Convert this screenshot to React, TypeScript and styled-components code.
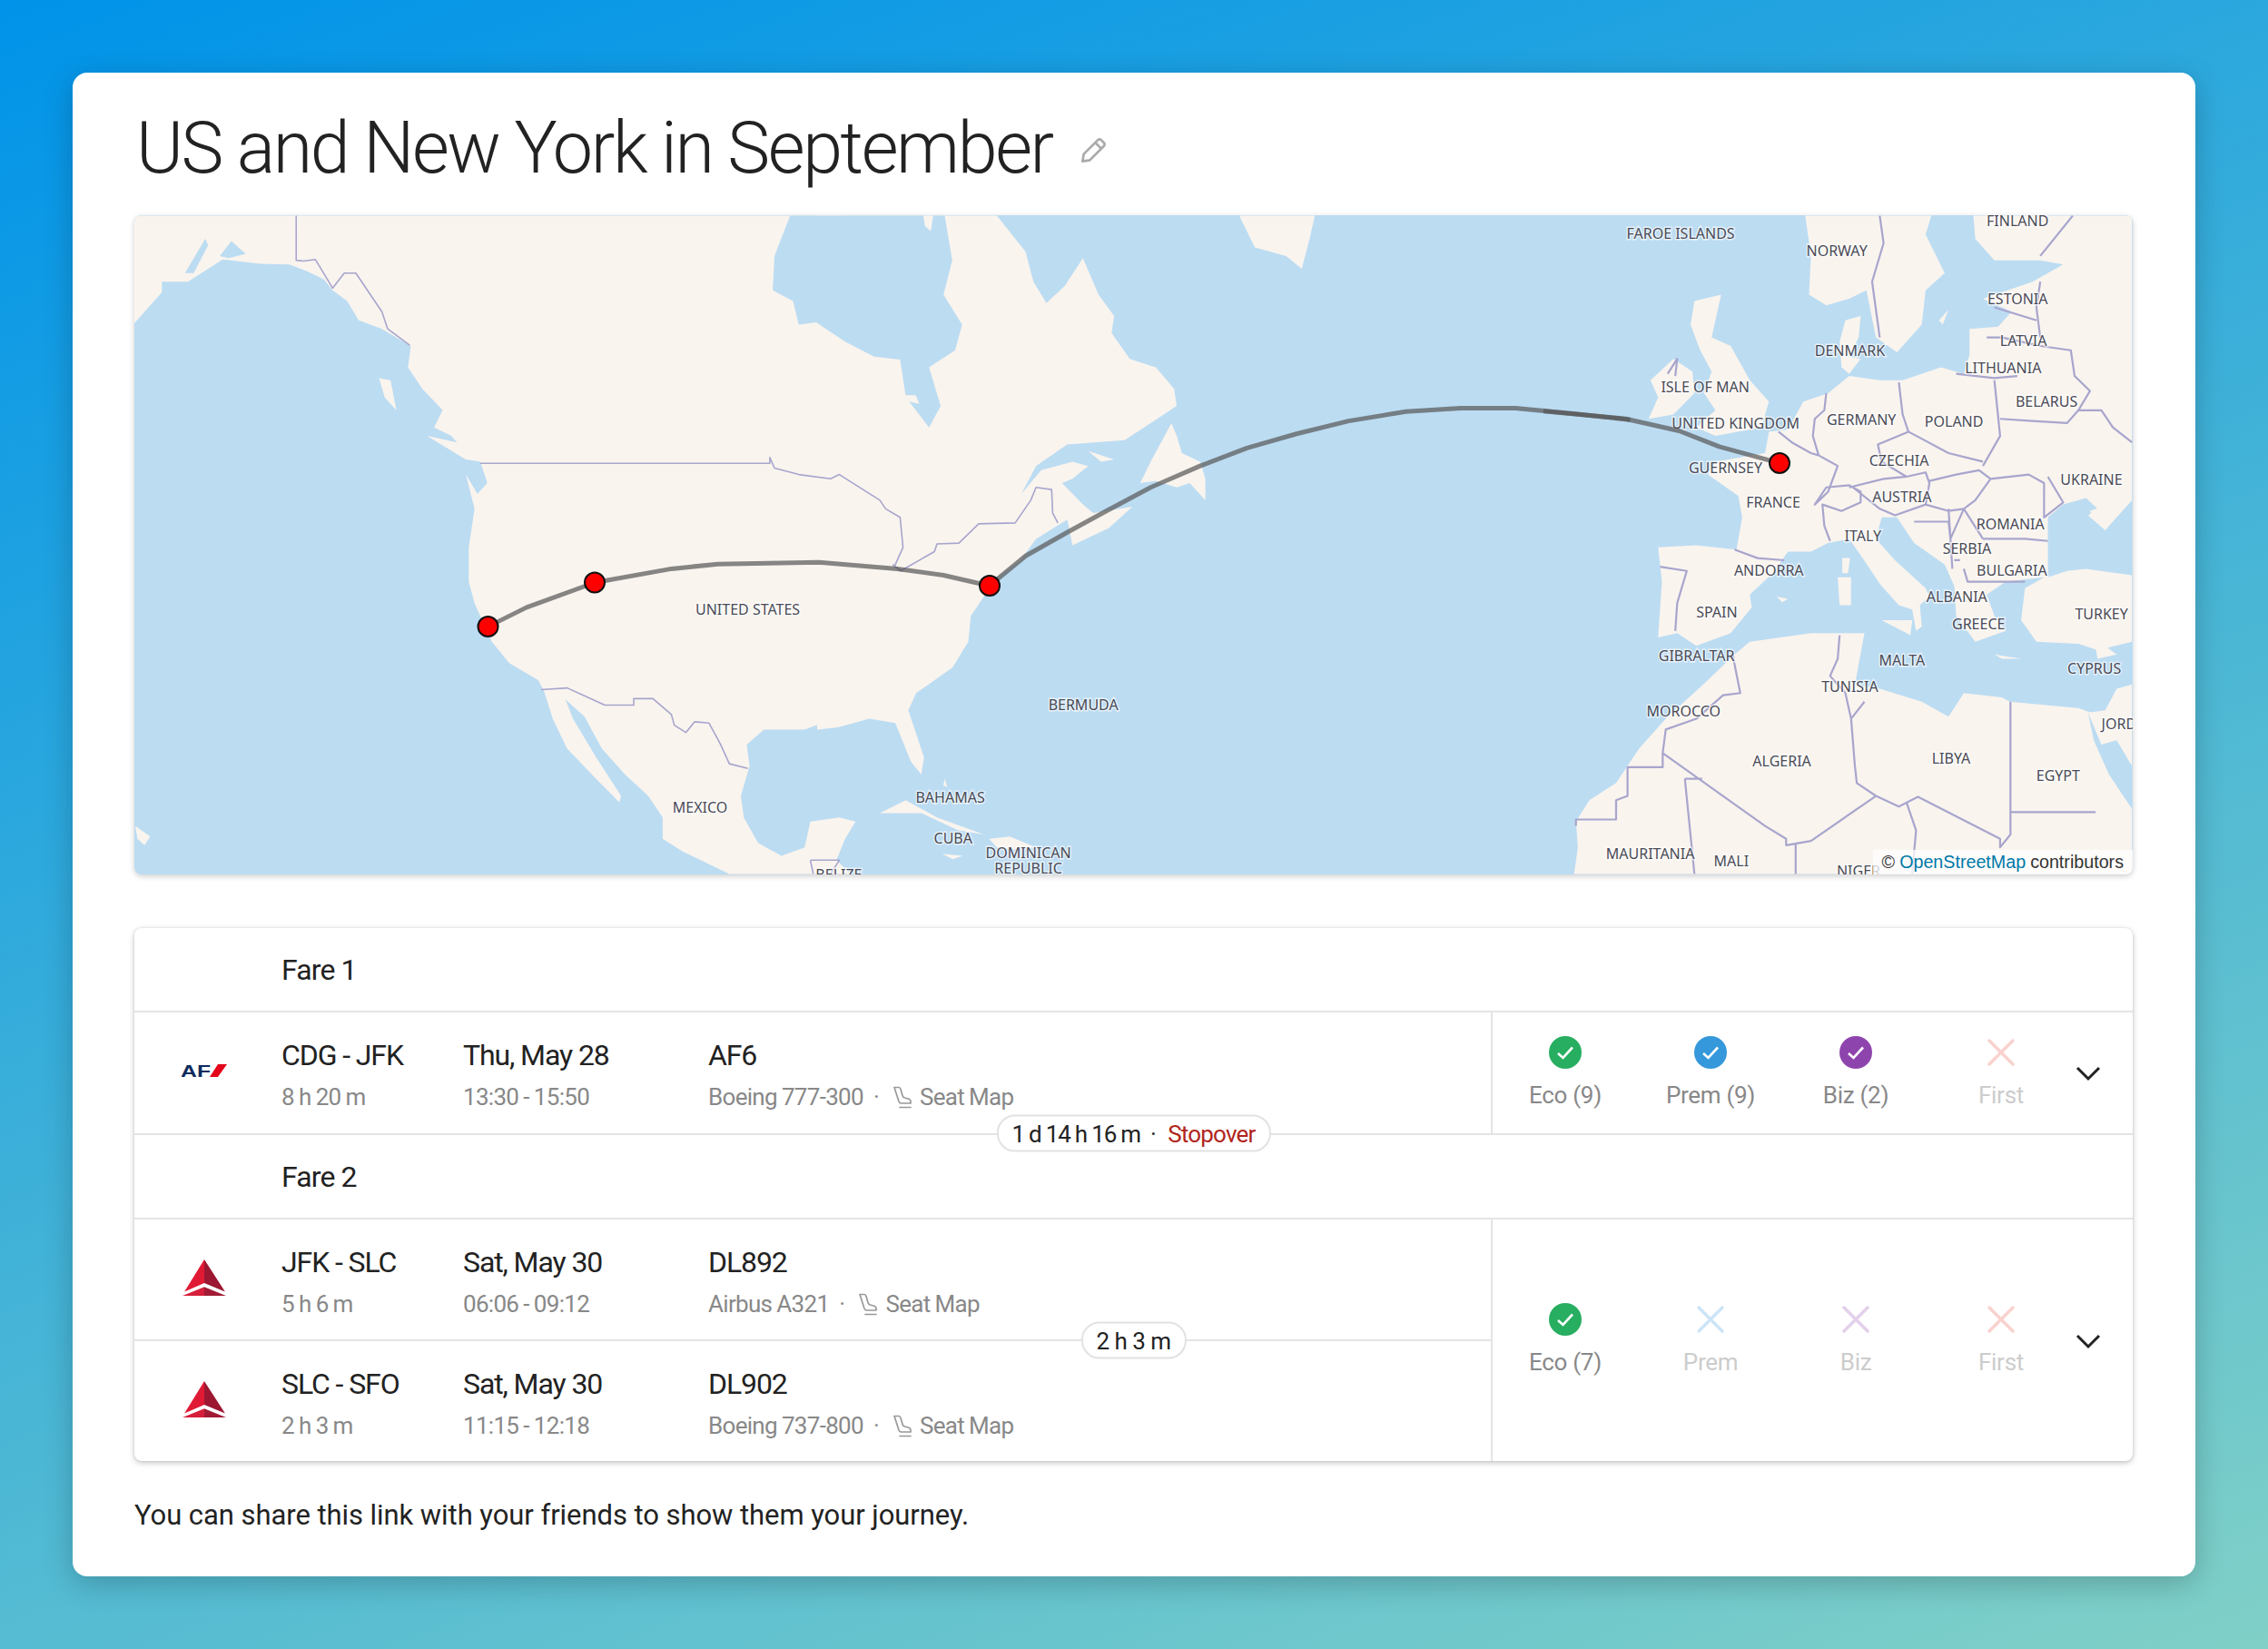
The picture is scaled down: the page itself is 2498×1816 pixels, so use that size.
import React from "react";
import styled, { createGlobalStyle } from "styled-components";

const GlobalStyle = createGlobalStyle`
  html, body { margin: 0; padding: 0; }
  body { font-family: Roboto, "Liberation Sans", sans-serif; color: #222; }
`;

const Page = styled.div`
  min-height: 1816px;
  box-sizing: border-box;
  padding: 80px;
  background: linear-gradient(160deg, #0093e9 0%, #80d0c7 100%);
`;
const Card = styled.main`
  height: 1656px;
  box-sizing: border-box;
  padding: 24px 69px 0 68px;
  background: #fff;
  border-radius: 16px;
  box-shadow: 0 8px 32px rgba(0, 0, 0, 0.22);
`;
const TitleRow = styled.div`
  display: flex;
  align-items: flex-start;
  gap: 30px;
  height: 133px;
`;
const Title = styled.h1`
  margin: 11px 0 0 2px;
  font-size: 79px;
  line-height: 96px;
  font-weight: 300;
  letter-spacing: -2.4px;
  color: #222;
`;
const EditIcon = styled.svg`
  width: 32px;
  height: 32px;
  margin-top: 45px;
  fill: none;
  stroke: #aaa;
  stroke-width: 2;
  stroke-linejoin: round;
`;
const MapFrame = styled.section`
  position: relative;
  height: 726px;
  border-radius: 8px;
  overflow: hidden;
  box-shadow: 0 2px 6px rgba(0, 0, 0, 0.2);
  background: #bcdcf2;
`;
const MapSvg = styled.svg`
  display: block;
  width: 100%;
  height: 100%;
`;
const MapLabel = styled.text`
  font-family: "Noto Sans", sans-serif;
  font-size: 16px;
  fill: #4a4a56;
  text-anchor: middle;
  paint-order: stroke;
  stroke: rgba(255, 255, 255, 0.6);
  stroke-width: 3px;
`;
const Attribution = styled.div`
  position: absolute;
  right: 0;
  bottom: 0;
  height: 27px;
  padding: 0 10px;
  display: flex;
  align-items: center;
  gap: 5px;
  background: rgba(255, 255, 255, 0.75);
  font-family: "Liberation Sans", Arial, sans-serif;
  font-size: 19.7px;
  color: #333;
`;
const OsmLink = styled.span`
  color: #0078a8;
`;
const Table = styled.section`
  margin-top: 59px;
  height: 587px;
  border-radius: 8px;
  box-shadow: 0 2px 6px rgba(0, 0, 0, 0.24), 0 0 2px rgba(0, 0, 0, 0.12);
  background: #fff;
`;
const FareHeader = styled.div`
  box-sizing: border-box;
  height: 93px;
  padding: 1px 0 0 162px;
  display: flex;
  align-items: center;
  font-size: 32px;
  letter-spacing: -0.9px;
  color: #222;
  border-bottom: 2px solid #e4e4e4;
`;
const FareBody = styled.div`
  position: relative;
  display: grid;
  grid-template-columns: 1496px 1fr;
  border-bottom: ${(p) => (p.$last ? "none" : "2px solid #e4e4e4")};
`;
const Segments = styled.div`
  border-right: 2px solid #e4e4e4;
`;
const Segment = styled.div`
  box-sizing: border-box;
  height: ${(p) => p.$height}px;
  display: grid;
  grid-template-columns: 162px 200px 270px 1fr;
  padding-top: 24px;
  border-bottom: ${(p) => (p.$divided ? "2px solid #e4e4e4" : "none")};
`;
const LogoCell = styled.div`
  width: 154px;
  height: 80px;
  display: flex;
  align-items: center;
  justify-content: center;
`;
const CellTitle = styled.div`
  font-size: 32px;
  line-height: 46px;
  letter-spacing: -1.1px;
  color: #222;
  white-space: nowrap;
`;
const CellSub = styled.div`
  display: flex;
  align-items: center;
  font-size: 26px;
  line-height: 46px;
  letter-spacing: -0.7px;
  word-spacing: -0.7px;
  color: #888;
  white-space: nowrap;
`;
const Dot = styled.span`
  margin: 0 13px 0 11px;
`;
const SeatIcon = styled.svg`
  width: 20px;
  height: 25px;
  margin: 0 9px 0 3px;
  fill: none;
  stroke: #999;
  stroke-width: 1.7;
  stroke-linejoin: round;
  stroke-linecap: round;
`;
const Pill = styled.div`
  position: absolute;
  left: 50%;
  top: ${(p) => p.$at};
  z-index: 2;
  transform: translate(-50%, -50%);
  box-sizing: border-box;
  height: 41px;
  padding: 0 15px;
  display: flex;
  align-items: center;
  background: #fff;
  border: 2px solid #e2e2e2;
  border-radius: 20px;
  font-size: 26px;
  letter-spacing: -0.5px;
  color: #222;
  white-space: nowrap;
`;
const Layover = styled.span`
  letter-spacing: -1.2px;
`;
const Stopover = styled.span`
  color: #b0261c;
  letter-spacing: -0.8px;
`;
const Cabins = styled.div`
  display: flex;
  align-items: center;
  padding-top: 1px;
`;
const Cabin = styled.div`
  width: 160px;
  display: flex;
  flex-direction: column;
  align-items: center;
`;
const CabinIcon = styled.svg`
  width: 36px;
  height: 36px;
  display: block;
`;
const CabinLabel = styled.div`
  margin-top: 11px;
  font-size: 26px;
  line-height: 36px;
  letter-spacing: -0.3px;
  color: ${(p) => (p.$off ? "#ccc" : "#888")};
`;
const Chevron = styled.svg`
  width: 32px;
  height: 32px;
  fill: none;
  stroke: #222;
  stroke-width: 3;
`;
const Footer = styled.p`
  margin: 41px 0 0;
  font-size: 31px;
  line-height: 38px;
  letter-spacing: -0.06px;
  color: #222;
`;

const Land = styled.path`
  fill: #f9f4ee;
  stroke: none;
`;
const Water = styled.path`
  fill: #bcdcf2;
  stroke: none;
`;
const Border = styled.path`
  fill: none;
  stroke: #a8a5cd;
  stroke-width: ${(p) => p.$w || 2}px;
  stroke-linejoin: round;
  vector-effect: non-scaling-stroke;
`;
const Route = styled.path`
  fill: none;
  stroke: #555;
  stroke-opacity: 0.7;
  stroke-width: 5px;
  stroke-linejoin: round;
  vector-effect: non-scaling-stroke;
`;
const Marker = styled.circle`
  fill: #f00;
  stroke: #111;
  stroke-width: 2px;
`;

const Z6 = "translate(140 230) scale(0.63776 0.47192)";
const Z7 = "translate(900 230) scale(0.57398 0.47192)";
const Z5 = "translate(1700 230) scale(0.42088 0.47192)";

const labels = [
  ["FINLAND", 1395, 157], ["FAROE ISLANDS", 1162, 166], ["NORWAY", 1270, 178], ["ESTONIA", 1395, 211],
  ["LATVIA", 1399, 240], ["LITHUANIA", 1385, 259], ["DENMARK", 1279, 247], ["ISLE OF MAN", 1179, 272],
  ["BELARUS", 1415, 282], ["UNITED KINGDOM", 1200, 297], ["GERMANY", 1287, 295], ["POLAND", 1351, 296],
  ["GUERNSEY", 1193, 328], ["CZECHIA", 1313, 323], ["UKRAINE", 1446, 336], ["FRANCE", 1226, 352],
  ["AUSTRIA", 1315, 348], ["ROMANIA", 1390, 367], ["ITALY", 1288, 375], ["SERBIA", 1360, 384],
  ["ANDORRA", 1223, 399], ["BULGARIA", 1391, 399], ["ALBANIA", 1353, 417], ["TURKEY", 1453, 429],
  ["SPAIN", 1187, 428], ["GREECE", 1368, 436], ["GIBRALTAR", 1173, 458], ["MALTA", 1315, 461],
  ["CYPRUS", 1448, 467], ["TUNISIA", 1279, 479], ["MOROCCO", 1164, 496], ["JORDAN", 1472, 505],
  ["ALGERIA", 1232, 531], ["LIBYA", 1349, 529], ["EGYPT", 1423, 541], ["MAURITANIA", 1141, 595],
  ["MALI", 1197, 600], ["NIGER", 1285, 607], ["UNITED STATES", 517, 426], ["MEXICO", 484, 563],
  ["BAHAMAS", 657, 556], ["CUBA", 659, 584], ["DOMINICAN", 711, 594], ["REPUBLIC", 711, 605],
  ["BELIZE", 580, 609], ["BERMUDA", 749, 492],
];

const WorldMap = () => (
  <MapSvg viewBox="148 237 2201 726" preserveAspectRatio="none">
    <g transform={Z6}>
      <Land d="M12 16L12 268L40 225L60 195L60 170L105 170L165 118L230 128L280 130L310 145L340 165L355 190L380 215L400 260L440 280L490 320L485 370L510 420L545 470L530 510L560 530L585 570L610 590L622 640L605 665L585 620L600 700L590 790L590 870L600 920L630 1010L660 1060L710 1100L720 1125L735 1190L760 1260L810 1330L850 1385L853 1370L810 1280L770 1190L757 1145L790 1185L820 1260L860 1320L900 1370L925 1420L925 1470L960 1500L1040 1552L1250 1552L1225 1520L1240 1470L1258 1430L1230 1420L1180 1430L1170 1490L1130 1510L1090 1480L1065 1420L1060 1370L1075 1300L1070 1250L1100 1215L1170 1215L1240 1180L1240 16Z" />
      <Water d="M100 150L135 70L140 85L115 150Z" />
      <Water d="M160 110L180 75L205 105L175 115Z" />
      <Land d="M435 395L455 400L465 470L445 440Z" />
      <Land d="M518 530L570 545L610 590L585 585Z" />
      <Land d="M14 1440L40 1465L30 1485L18 1470Z" />
    </g>
    <g transform={Z7}>
      <Land d="M0 16L345 16L400 100L415 170L440 220L475 180L510 115L540 200L570 250L565 290L600 350L650 370L685 420L690 460L640 500L590 540L480 550L420 600L392 665L430 610L490 590L520 600L490 630L470 640L510 690L530 710L605 695L560 745L490 785L480 725L420 770L390 820L345 860L320 905L295 950L290 1010L260 1070L190 1130L175 1170L205 1280L200 1320L180 1290L150 1200L100 1190L40 1210L0 1215Z" />
      <Land d="M620 640L640 590L680 500L690 530L700 570L735 590L745 630L745 680L715 640L690 650L650 635Z" />
      <Land d="M810 16L840 90L900 110L930 140L945 70L955 16Z" />
      <Land d="M120 1410L170 1380L230 1420L320 1460L270 1450L200 1410Z" />
      <Land d="M330 1470L370 1465L420 1490L375 1495L345 1490Z" />
      <Land d="M240 1505L280 1510L260 1518Z" />
      <Land d="M520 565L570 585L545 590Z" />
      <Land d="M245 1330L250 1350L242 1345Z" />
    </g>
    <g transform={Z6}>
      <Water d="M1145 16L1118 110L1115 190L1150 215L1160 270L1190 265L1240 310L1290 345L1335 352L1345 440L1385 510L1405 460L1385 370L1430 330L1442 270L1410 200L1425 120L1412 16Z" />
      <Land d="M1375 16L1392 16L1388 52L1378 40Z" />
      <Land d="M1342 435L1362 435L1368 455L1350 450Z" />
      <Border $w={1.6} d="M292 16L292 120L305 122L325 118L355 185L375 150L395 150L440 240L450 280L488 318" />
      <Border $w={1.6} d="M715 1122L760 1118L825 1158L875 1158L875 1143L908 1143L940 1180L945 1205L965 1222L980 1197L1005 1200L1025 1250L1040 1295L1072 1306" />
      <Border $w={1.6} d="M610 594L1110 594L1110 580L1118 605L1160 620L1215 630L1230 620L1300 680L1310 700L1335 720L1340 790L1325 835L1340 845" />
      <Border $w={1.6} d="M1180 1520L1230 1520L1215 1552M1180 1520L1185 1552" />
    </g>
    <g transform={Z7}>
      <Border $w={1.6} d="M145 830L160 845L225 800L230 782L272 780L310 735L380 733L410 680L420 650L450 655L452 710L462 733" />
    </g>
    <g transform={Z5}>
      <Land d="M1125 16L1540 16L1540 1010L1450 1030L1400 1015L1290 1010L1250 960L1260 885L1310 860L1210 870L1160 900L1180 950L1210 985L1130 1010L1080 950L1075 880L1050 830L970 780L925 720L885 720L870 770L920 820L1000 885L1010 905L985 925L990 975L975 985L965 935L930 925L880 875L835 815L800 770L745 780L700 800L640 800L600 850L540 900L545 930L490 990L400 1020L350 990L300 1000L310 870L300 790L400 785L505 795L520 720L510 670L430 620L450 590L580 570L590 520L640 515L680 450L745 430L800 390L880 400L940 400L1040 370L1100 385L1115 340L1115 280L1190 275L1225 240L1150 210L1280 170L1360 130L1300 120L1180 120L1130 70Z" />
      <Water d="M1320 720L1360 690L1420 675L1450 700L1425 715L1470 750L1500 720L1540 680L1540 855L1420 840L1370 845L1320 860L1320 790Z" />
      <Land d="M1430 705L1460 695L1495 715L1470 745L1445 725Z" />
      <Land d="M685 16L700 110L695 200L740 225L800 210L845 190L870 300L925 335L990 270L1000 190L1050 150L1000 60L1015 16Z" />
      <Land d="M775 310L790 260L830 250L825 300L800 345L830 350L800 385L780 370Z" />
      <Land d="M395 215L465 200L440 300L490 320L540 400L590 450L570 510L450 530L400 510L450 470L420 430L440 380L410 330L385 270Z" />
      <Land d="M280 400L340 350L390 380L395 430L340 480L275 490L300 440Z" />
      <Land d="M770 860L805 860L805 925L775 925Z" />
      <Land d="M782 815L802 815L797 850L782 850Z" />
      <Land d="M885 960L965 960L960 995Z" />
      <Land d="M1180 1040L1250 1050L1200 1050Z" />
      <Land d="M1440 1000L1500 1040L1450 1050Z" />
      <Land d="M610 905L640 910L625 918Z" />
      <Land d="M1035 260L1060 235L1045 270Z" />
      <Land d="M500 1040L540 1010L700 990L780 990L840 990L815 1110L880 1120L990 1150L1060 1185L1100 1130L1200 1140L1220 1150L1400 1165L1430 1175L1470 1170L1500 1120L1540 1110L1540 1552L80 1552L90 1490L85 1430L120 1380L190 1340L250 1260L320 1190L430 1100Z" />
      <Water d="M1425 1175L1460 1250L1500 1240L1540 1300L1540 1400L1480 1320L1440 1240Z" />
      <Border $w={2.2} d="M880 16L890 80L860 170L880 300M1385 16L1300 110M325 385L350 350L345 390M740 430L735 470L710 490L705 530L720 575M615 520L650 545L700 570L720 575L770 600L745 660L710 690L740 650L800 645L830 660L830 685L780 705L730 690L735 740L750 775M500 795L560 815L630 820M305 835L375 845L350 920L345 985" />
      <Border $w={2.2} d="M930 405L940 480L955 520L875 550L885 590L950 625M955 520L1060 570L1150 590M800 650L890 630L950 625L1000 615L1010 640L1000 690L920 715L880 700L810 650M1010 635L1080 620L1140 610L1170 630M1180 400L1195 530L1150 600M1080 385L1180 395L1240 390M1160 300L1200 300L1300 320L1380 330L1390 390L1430 425L1400 470M1300 170L1290 230L1300 300M1180 230L1290 260" />
      <Border $w={2.2} d="M1195 490L1280 495L1370 500L1400 470L1460 470L1490 510L1540 545M1170 630L1270 620L1310 640L1310 720L1360 685L1320 625M1170 630L1130 680L1100 700M1000 690L1060 705L1100 700M1150 770L1260 770L1320 775M970 730L1060 730L1065 770L1100 700L1150 770M1060 700L1070 840M1100 840L1110 870L1210 870L1260 870M1075 820L1090 820" />
      <Border $w={2.2} d="M495 1040L515 1130L470 1135L400 1190L320 1215L312 1270L580 1440L635 1470L635 1485L700 1475L870 1370M312 1270L312 1303L220 1303L220 1370L190 1380L190 1425L85 1425L85 1440M370 1330L415 1330M370 1330L395 1552M775 995L770 1050L750 1090L790 1130L805 1190L840 1150M805 1190L815 1300L820 1340L870 1370L930 1395L980 1372L1195 1470L1195 1490L1222 1460L1222 1150M1222 1408L1445 1408M950 1385L975 1450L965 1552M660 1480L660 1552" />
    </g>
    {labels.map(([t, x, y]) => (
      <MapLabel key={t} x={x * 1.593} y={y * 1.593 - 1.5}>
        {t}
      </MapLabel>
    ))}
    <g transform={Z6}>
      <Route d="M623 975L690 930L808 872L940 840L1020 829L1195 825L1330 840L1410 855L1490 880" />
    </g>
    <g transform={Z7}>
      <Route d="M330 880L400 810L480 755L555 705L640 650L735 600L825 558L920 525L1020 495L1130 473L1235 465L1340 465L1450 478L1560 492" />
    </g>
    <g transform={Z5}>
      <Route d="M0 472L215 490L355 518L460 555L617 593" />
    </g>
    <Marker cx="537.500" cy="690" r="11" />
    <Marker cx="655" cy="641.500" r="11" />
    <Marker cx="1090" cy="645" r="11" />
    <Marker cx="1960" cy="510" r="11" />
  </MapSvg>
);

const Delta = () => (
  <svg width="50" height="41" viewBox="0 0 48 38" preserveAspectRatio="none">
    <path fill="#e01a35" d="M24 0V24L3 33Z" />
    <path fill="#9c1731" d="M24 0V24L46 33Z" />
    <path fill="#d61f3a" d="M24 28V37H1Z" />
    <path fill="#a21b35" d="M24 28V37H47Z" />
  </svg>
);

const AirFrance = () => (
  <svg width="52" height="16" viewBox="0 0 52 16">
    <text x="0" y="15" fontFamily="Liberation Sans, Arial, sans-serif" fontWeight="700" fontSize="19" fill="#0d2b5e" textLength="33" lengthAdjust="spacingAndGlyphs">
      AF
    </text>
    <path fill="#e3051b" d="M32 15L41 1H51L41 15Z" />
  </svg>
);

const Seat = () => (
  <SeatIcon viewBox="0 0 20 25">
    <path d="M1 1.500h5c1 0 1.500.5 2 2l2 7c.3 1.200 1 2 2.500 2.500l4.500 1.300c1.200.4 2 1.200 2 2.500v2.200H8.500c-1.200 0-2-.7-2.500-2L1 1.500z" />
    <path d="M7 23.500h12" />
  </SeatIcon>
);

const Check = ({ color }) => (
  <CabinIcon viewBox="0 0 36 36">
    <circle cx="18" cy="18" r="18" fill={color} />
    <path d="M10 19l5.500 5L26 12.500" fill="none" stroke="#fff" strokeWidth="2.600" />
  </CabinIcon>
);
const Cross = ({ color }) => (
  <CabinIcon viewBox="0 0 36 36">
    <path d="M5 5L31 31M31 5L5 31" fill="none" stroke={color} strokeWidth="3.500" strokeLinecap="round" strokeOpacity="0.25" />
  </CabinIcon>
);

const colors = { Eco: "#27ae60", Prem: "#3498db", Biz: "#8e44ad", First: "#e74c3c" };

const CabinSet = ({ counts }) => (
  <Cabins>
    {Object.keys(colors).map((name) => (
      <Cabin key={name}>
        {counts[name] ? <Check color={colors[name]} /> : <Cross color={colors[name]} />}
        <CabinLabel $off={!counts[name]}>{counts[name] ? `${name} (${counts[name]})` : name}</CabinLabel>
      </Cabin>
    ))}
    <Chevron viewBox="0 0 32 32">
      <path d="M4 10L16 22L28 10" />
    </Chevron>
  </Cabins>
);

const Leg = ({ logo, route, length, date, time, flight, plane, height, divided }) => (
  <Segment $height={height} $divided={divided}>
    <LogoCell>{logo}</LogoCell>
    <div>
      <CellTitle>{route}</CellTitle>
      <CellSub>{length}</CellSub>
    </div>
    <div>
      <CellTitle>{date}</CellTitle>
      <CellSub>{time}</CellSub>
    </div>
    <div>
      <CellTitle>{flight}</CellTitle>
      <CellSub>
        {plane}
        <Dot>·</Dot>
        <Seat />
        Seat Map
      </CellSub>
    </div>
  </Segment>
);

export default function App() {
  return (
    <Page>
      <GlobalStyle />
      <Card>
        <TitleRow>
          <Title>US and New York in September</Title>
          <EditIcon viewBox="0 0 24 24">
            <path d="M2.500 21.500l1-6L15 4c1-1 2-1 3 0l2 2c1 1 1 2 0 3L8.500 20.500z" />
            <path d="M13 6l5 5" />
          </EditIcon>
        </TitleRow>
        <MapFrame>
          <WorldMap />
          <Attribution>
            © <OsmLink>OpenStreetMap</OsmLink> contributors
          </Attribution>
        </MapFrame>
        <Table>
          <FareHeader>Fare 1</FareHeader>
          <FareBody>
            <Segments>
              <Leg height={133} logo={<AirFrance />} route="CDG - JFK" length="8 h 20 m" date="Thu, May 28" time="13:30 - 15:50" flight="AF6" plane="Boeing 777-300" />
            </Segments>
            <CabinSet counts={{ Eco: 9, Prem: 9, Biz: 2 }} />
            <Pill $at="100%">
              <Layover>1 d 14 h 16 m</Layover>
              <Dot>·</Dot>
              <Stopover>Stopover</Stopover>
            </Pill>
          </FareBody>
          <FareHeader>Fare 2</FareHeader>
          <FareBody $last>
            <Segments>
              <Leg height={134} divided logo={<Delta />} route="JFK - SLC" length="5 h 6 m" date="Sat, May 30" time="06:06 - 09:12" flight="DL892" plane="Airbus A321" />
              <Leg height={132} logo={<Delta />} route="SLC - SFO" length="2 h 3 m" date="Sat, May 30" time="11:15 - 12:18" flight="DL902" plane="Boeing 737-800" />
            </Segments>
            <CabinSet counts={{ Eco: 7 }} />
            <Pill $at="50%">2 h 3 m</Pill>
          </FareBody>
        </Table>
        <Footer>You can share this link with your friends to show them your journey.</Footer>
      </Card>
    </Page>
  );
}
